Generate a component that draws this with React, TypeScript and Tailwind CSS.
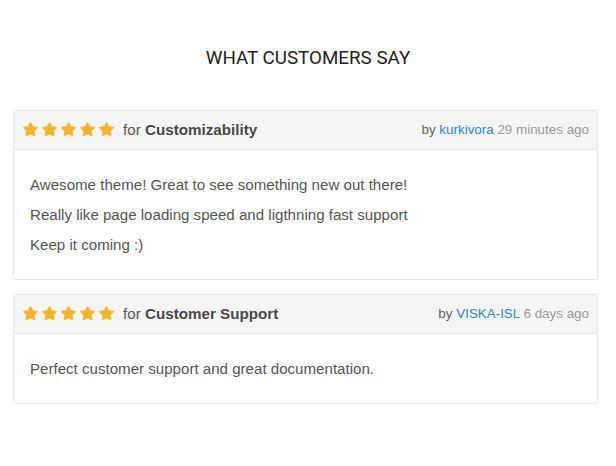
import { Star } from "lucide-react";

type Review = {
  topic: string;
  author: string;
  time: string;
  lines: string[];
};

const reviews: Review[] = [
  {
    topic: "Customizability",
    author: "kurkivora",
    time: "29 minutes ago",
    lines: [
      "Awesome theme! Great to see something new out there!",
      "Really like page loading speed and ligthning fast support",
      "Keep it coming :)",
    ],
  },
  {
    topic: "Customer Support",
    author: "VISKA-ISL",
    time: "6 days ago",
    lines: ["Perfect customer support and great documentation."],
  },
];

function Stars() {
  return (
    <div className="flex items-center gap-[2px]">
      {[0, 1, 2, 3, 4].map((i) => (
        <Star key={i} className="h-[17px] w-[17px] fill-[#f7b228] text-[#f7b228]" strokeWidth={1} />
      ))}
    </div>
  );
}

function ReviewCard({ review }: { review: Review }) {
  return (
    <div className="rounded-[3px] border border-[#e8e8e8] bg-white">
      <div className="flex h-[39px] items-center justify-between border-b border-[#e8e8e8] bg-[#f5f5f5] pl-2 pr-[8px]">
        <div className="flex items-center gap-2 text-[15.2px] text-[#555]">
          <Stars />
          <span>
            for <b className="font-bold text-[#484848]">{review.topic}</b>
          </span>
        </div>
        <div className="text-[13.4px] text-[#666]">
          by <span className="text-[#2d8ac7]">{review.author}</span>{" "}
          <span className="text-[#999]">{review.time}</span>
        </div>
      </div>
      <div className="px-4 pb-[19px] pt-5 text-[15.1px] leading-[30px] text-[#555]">
        {review.lines.map((line) => (
          <p key={line}>{line}</p>
        ))}
      </div>
    </div>
  );
}

export default function App() {
  return (
    <div className="h-[466px] w-[616px] bg-white font-['Liberation_Sans',Arial,sans-serif]">
      <h1 className="pt-[46px] text-center font-['Roboto',sans-serif] text-[18.8px] leading-6 text-[#222]">
        WHAT CUSTOMERS SAY
      </h1>
      <div className="ml-[13px] mt-[40px] flex w-[585px] flex-col gap-[14px]">
        {reviews.map((r) => (
          <ReviewCard key={r.topic} review={r} />
        ))}
      </div>
    </div>
  );
}
